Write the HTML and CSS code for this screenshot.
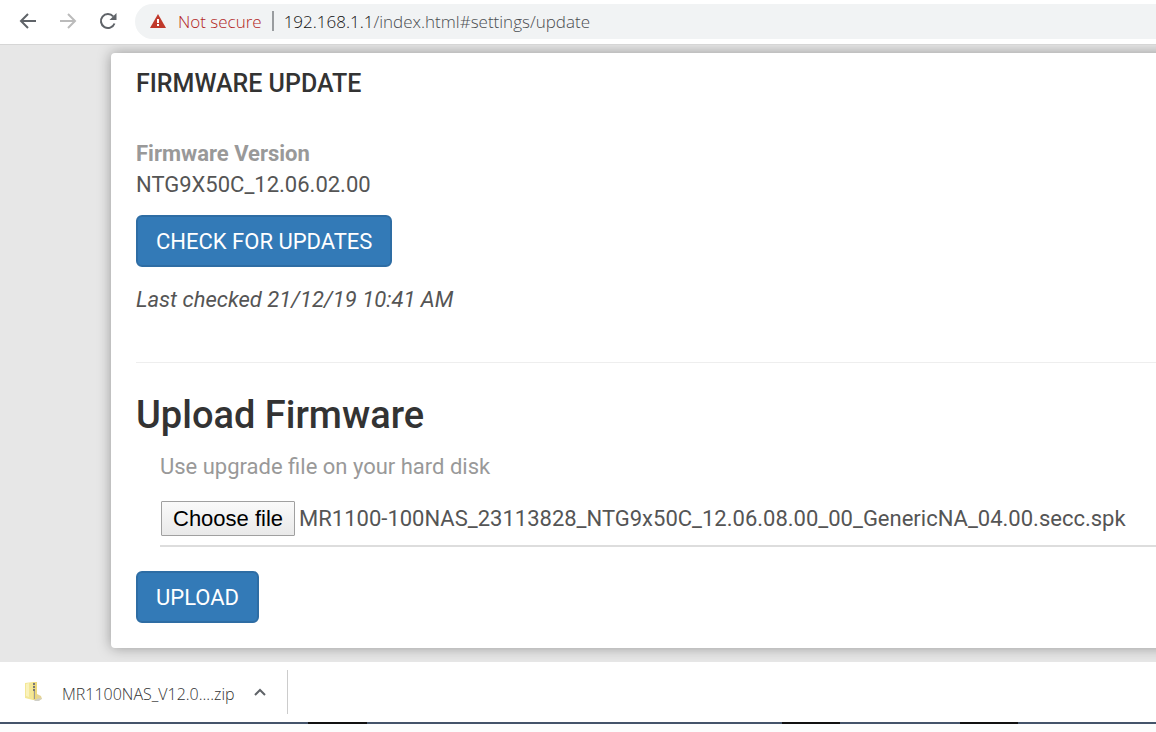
FILE: index.html
```html
<!DOCTYPE html>
<html lang="en">
  <head>
    <meta charset="UTF-8">
    <meta name="viewport" content="width=device-width, initial-scale=1.0">
    <title>Firmware Update</title>
    <link rel="stylesheet" href="styles.css">
  </head>
  <body>
    <header class="toolbar">
      <button class="nav-btn" type="button" aria-label="Back">
        <svg width="18" height="18" viewBox="0 0 18 18"><path d="M17 9H2M9 2L2 9l7 7"/></svg>
      </button>
      <button class="nav-btn disabled" type="button" aria-label="Forward" disabled>
        <svg width="18" height="18" viewBox="0 0 18 18"><path d="M1 9h15M9 2l7 7-7 7"/></svg>
      </button>
      <button class="nav-btn" type="button" aria-label="Reload">
        <svg width="18" height="18" viewBox="0 0 18 18"><path d="M15.5 11.5A7 7 0 1 1 14.2 4.4"/><path class="solid" d="M17.5 1v7h-7z"/></svg>
      </button>
      <form class="address">
        <svg class="warning" width="16" height="14" viewBox="0 0 16 14"><path fill="#c0392b" d="M8 0l8 14H0z"/><path fill="#fff" d="M7 5h2v4H7zM7 10h2v2H7z"/></svg>
        <span class="not-secure">Not secure</span>
        <span class="divider"></span>
        <label class="host" for="path">192.168.1.1</label>
        <input class="path" id="path" type="text" value="/index.html#settings/update">
      </form>
    </header>

    <main class="page">
      <div class="card">
        <h2>FIRMWARE UPDATE</h2>
        <div class="label">Firmware Version</div>
        <div class="value">NTG9X50C_12.06.02.00</div>
        <button class="btn" type="button">CHECK FOR UPDATES</button>
        <p class="checked">Last checked 21/12/19 10:41 AM</p>
        <hr>
        <h1>Upload Firmware</h1>
        <form>
          <div class="upload">
            <p class="hint">Use upgrade file on your hard disk</p>
            <div class="file-row">
              <input class="file-input" id="file" type="file">
              <label class="file-btn" for="file">Choose file</label>
              <span class="file-name">MR1100-100NAS_23113828_NTG9x50C_12.06.08.00_00_GenericNA_04.00.secc.spk</span>
            </div>
          </div>
          <button class="btn" type="button">UPLOAD</button>
        </form>
      </div>
    </main>

    <footer class="downloads">
      <div class="item">
        <svg class="zip" width="20" height="22" viewBox="0 0 20 22">
          <path fill="#e6d596" d="M13 13l4 2 1 3-4 2-4-1z"/>
          <path fill="#cfcfc8" d="M12 18l6-1-3 3h-5z"/>
          <path fill="#f3e796" d="M1 2l8-1v18l-8-2z"/>
          <path fill="#faf2bb" d="M2 3l3-1v14l-3-1z"/>
          <path fill="#ecd97f" d="M9 1h4v17l-4 1z"/>
          <path stroke="#777" stroke-width="2" stroke-dasharray="2 1" d="M10 2v8"/>
          <path stroke="#999" stroke-width="1" d="M10.5 10v8"/>
        </svg>
        <span class="zip-name">MR1100NAS_V12.0....zip</span>
        <button class="more" type="button" aria-label="Download options">
          <svg width="12" height="8" viewBox="0 0 12 8"><path d="M1 7l5-5 5 5"/></svg>
        </button>
      </div>
    </footer>
    <div class="taskbar"></div>
  </body>
</html>
```

FILE: styles.css
```css
* {
    box-sizing: border-box;
}

body {
    margin: 0;
    background: #fff;
    color: #555;
    font-family: Roboto, Arial, sans-serif;
    font-size: 22px;
    line-height: 31px;
    overflow-x: hidden;
}

button {
    font-family: inherit;
    cursor: pointer;
}

h1, h2, p {
    margin: 0;
    font-weight: 500;
    color: #333;
}

/* browser toolbar */
.toolbar {
    display: flex;
    align-items: center;
    gap: 22px;
    height: 45px;
    padding-left: 19px;
    padding-bottom: 2px;
    border-bottom: 1px solid #d6d6d6;
}

.nav-btn {
    display: flex;
    padding: 0;
    border: 0;
    background: none;
}

.nav-btn svg, .more svg {
    fill: none;
    stroke: #5f6368;
    stroke-width: 2;
}

.nav-btn.disabled svg {
    stroke: #bbb;
}

.nav-btn .solid {
    fill: #5f6368;
    stroke: none;
}

.address {
    display: flex;
    align-items: center;
    flex: 1;
    height: 35px;
    margin-left: -4px;
    padding-left: 15px;
    border-radius: 18px 0 0 18px;
    background: #f1f3f4;
    font-family: "Open Sans", "Noto Sans", sans-serif;
    font-size: 17px;
    font-weight: 300;
}

.not-secure {
    margin-left: 12px;
    color: #b3261e;
}

.divider {
    width: 2px;
    height: 20px;
    margin: 0 10px;
    background: #999c9f;
}

.host {
    color: #111;
}

.path {
    flex: 1;
    min-width: 0;
    padding: 0;
    border: 0;
    background: none;
    color: #4a4d51;
    font: inherit;
    outline: none;
}

/* router page */
.page {
    padding: 8px 0 14px 111px;
    background: #e7e7e7;
    overflow: hidden;
}

/* runs past the right edge of the window */
.card {
    margin-right: -20px;
    padding: 16px 0 25px 25px;
    border-radius: 4px;
    background: #fff;
    box-shadow: 0 0 14px rgba(0, 0, 0, 0.35);
}

h2 {
    margin-bottom: 39px;
    font-size: 25px;
    line-height: 30px;
}

h1 {
    font-size: 38px;
    line-height: 42px;
}

.label {
    color: #999;
    font-weight: bold;
}

.btn {
    display: block;
    height: 52px;
    padding: 0 18px;
    border: 2px solid #2e6da4;
    border-radius: 6px;
    background: #337ab7;
    color: #fff;
    font-size: 22px;
}

.value {
    margin-bottom: 15px;
}

.checked {
    margin-top: 17px;
    color: #555;
    font-style: italic;
    font-weight: normal;
}

hr {
    height: 1px;
    margin: 47px 0 31px;
    border: 0;
    background: #eee;
}

.upload {
    margin: 15px 0 24px 24px;
}

.hint {
    color: #999;
    font-weight: normal;
}

.file-row {
    display: flex;
    align-items: center;
    margin-top: 19px;
    padding: 0 0 9px 1px;
    border-bottom: 2px solid #ddd;
}

/* the label is the visible button */
.file-input {
    position: absolute;
    width: 1px;
    height: 1px;
    opacity: 0;
}

.file-btn {
    height: 35px;
    padding: 0 11px;
    border: 1px solid #a0a0a0;
    border-radius: 1px;
    background: linear-gradient(#fafafa, #e9e9e9);
    color: #000;
    font-family: "Liberation Sans", Arial, sans-serif;
    line-height: 33px;
    white-space: nowrap;
}

.file-name {
    margin-left: 4px;
    white-space: nowrap;
}

/* download shelf */
.downloads {
    display: flex;
    align-items: center;
    height: 60px;
}

.item {
    display: flex;
    align-items: center;
    height: 44px;
    padding-left: 24px;
    padding-right: 21px;
    border-right: 1px solid #ccc;
}

.zip-name {
    margin-left: 18px;
    padding-top: 4px;
    color: #333;
    font-family: "Open Sans", "Noto Sans", sans-serif;
    font-size: 16px;
    font-weight: 300;
}

.more {
    display: flex;
    margin-left: 19px;
    padding: 0;
    border: 0;
    background: none;
}

.taskbar {
    height: 10px;
    border-bottom: 8px solid #fcfdfd;
    background: linear-gradient(90deg, #44546a 308px, #111 308px 367px, #44546a 367px 782px, #111 782px 840px, #44546a 840px 960px, #111 960px 1018px, #44546a 1018px);
}
```
